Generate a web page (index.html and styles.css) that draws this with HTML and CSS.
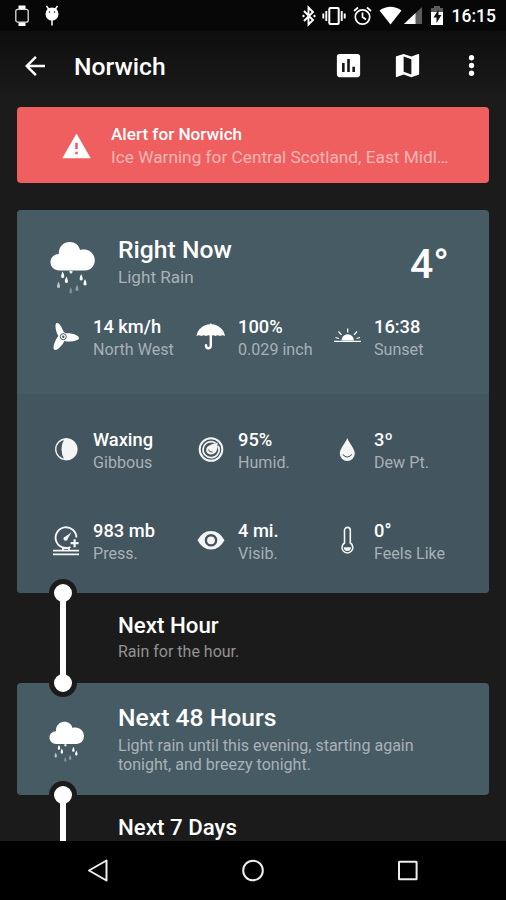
FILE: index.html
```html
<!DOCTYPE html>
<html lang="en">
<head>
<meta charset="utf-8">
<title>Norwich</title>
<link rel="stylesheet" href="styles.css">
</head>
<body>
<svg class="defs" width="0" height="0">
  <symbol id="rain" viewBox="0 0 46 54">
    <path d="M9.300 29.500C4 29.500.5 25.600.5 21.200C.5 16.700 4 13.300 8.800 13.100C8.500 6 13.300 1 19.800 1C24.800 1 28.800 4 30.100 8.900C38.300 6.800 44.800 12.200 44.800 19.300C44.800 25.200 40.600 29.500 35.100 29.500Z"/>
    <path d="M12.700 30.500c1.500 3 2.500 6.500 0 6.500s-1.500-3.500 0-6.500z"/>
    <path d="M16.400 35.500c1.500 3 2.500 6.500 0 6.500s-1.500-3.500 0-6.500z"/>
    <path d="M31.200 33c1.500 3 2.500 6.500 0 6.500s-1.500-3.500 0-6.500z"/>
    <path d="M35 38c1.500 3 2.500 6.500 0 6.500s-1.500-3.500 0-6.500z"/>
    <path opacity=".9" d="M19.300 30h3.300q-.1 2.800-1.600 2.800t-1.700-2.800z"/>
    <path opacity=".65" d="M8.500 40.500c1.500 3 2.500 6.500 0 6.500s-1.500-3.500 0-6.500z"/>
    <path opacity=".4" d="M27 43.500c1.500 3 2.500 6.500 0 6.500s-1.500-3.500 0-6.500z"/>
    <path opacity=".3" d="M20.800 46c1.500 3 2.500 6.500 0 6.500s-1.500-3.500 0-6.500z"/>
  </symbol>
</svg>
<div class="screen">
  <header class="status">
    <svg class="watch" width="14" height="22" viewBox="0 0 14 22"><path d="M3.500.5h7v4h-7zM3.500 17h7v4h-7z"/><rect x=".8" y="4.300" width="12.400" height="12.900" rx="2" fill="#070707" stroke="#ddd" stroke-width="1.300"/></svg>
    <svg class="droid" width="14" height="22" viewBox="0 0 14 22"><path d="M1.500 1l2.500 3.500M12.500 1L10 4.500M7 15v5.500" stroke="#fff" stroke-width="1.500"/><ellipse cx="7" cy="9" rx="6.500" ry="6.600"/><circle cx="4.500" cy="7" r=".8" fill="#222"/><circle cx="9.500" cy="7" r=".8" fill="#222"/></svg>
    <div class="tray">
      <svg width="14" height="22" viewBox="0 0 14 22"><path d="M2 6l9 9-4.500 4.500V2.500L11 7l-9 9" fill="none" stroke="#fff" stroke-width="1.900"/><path d="M12.500 9.500l1.500 1.500-1.500 1.500L11 11zM1.500 9.500L3 11l-1.500 1.500L0 11z"/></svg>
      <svg class="vibrate" width="24" height="22" viewBox="0 0 24 22"><rect x="7.300" y="3" width="9.400" height="16" rx="1" fill="none" stroke="#fff" stroke-width="2"/><path d="M4.300 6v10M19.700 6v10M1.300 8.500v5M22.700 8.500v5" stroke="#fff" stroke-width="1.900"/></svg>
      <svg class="alarm" width="19" height="22" viewBox="0 0 19 22"><g fill="none" stroke="#fff" stroke-width="1.700"><circle cx="9.500" cy="12" r="7.200"/><path d="M9.500 7.500V12l3.500 2.500M1 6l4-3.500M18 6l-4-3.500"/></g></svg>
      <svg class="wifi" width="23" height="22" viewBox="0 0 23 22"><path d="M11.500 19.500L.5 5.500Q11.500-2 22.500 5.500z"/></svg>
      <svg class="signal" width="18" height="22" viewBox="0 0 18 22"><path d="M18 2v17H0z" fill="#5b5b5b"/><path d="M11.500 8v11H0z"/></svg>
      <svg class="battery" width="14" height="22" viewBox="0 0 14 22"><path d="M4 1h6v2h3v7H1V3h3z" fill="#5b5b5b"/><path d="M1 7h12v13H1z"/><path d="M8.500 4.500L3.500 12.500h3V18l5-8h-3z" fill="#111"/></svg>
      <span class="clock">16:15</span>
    </div>
  </header>

  <nav class="appbar">
    <svg width="30" height="30" viewBox="0 0 24 24"><path d="M20 11H7.830l5.590-5.590L12 4l-8 8 8 8 1.410-1.410L7.830 13H20z"/></svg>
    <h1>Norwich</h1>
    <svg class="chart" width="31" height="31" viewBox="0 0 24 24"><path d="M19 3H5c-1.100 0-2 .9-2 2v14c0 1.100.9 2 2 2h14c1.100 0 2-.9 2-2V5c0-1.100-.9-2-2-2zM9 17H7v-7h2zm4 0h-2V7h2zm4 0h-2v-4h2z"/></svg>
    <svg class="map" width="31" height="31" viewBox="0 0 24 24"><path d="M20.500 3l-.16.030L15 5.100 9 3 3.360 4.900c-.21.070-.36.250-.36.480V20.500c0 .280.220.500.500.500l.160-.030L9 18.900l6 2.100 5.640-1.900c.21-.07.360-.25.360-.48V3.500c0-.28-.22-.5-.5-.5zM15 19l-6-2.110V5l6 2.110z"/></svg>
    <svg class="more" width="31" height="31" viewBox="0 0 24 24"><circle cx="12" cy="6" r="2.050"/><circle cx="12" cy="12" r="2.050"/><circle cx="12" cy="18" r="2.050"/></svg>
  </nav>

  <main>
    <section class="alert">
      <svg width="31" height="31" viewBox="0 0 24 24"><path d="M1 21h22L12 2zm12-3h-2v-2h2zm0-4h-2V9h2z"/></svg>
      <div>
        <h2>Alert for Norwich</h2>
        <p>Ice Warning for Central Scotland, East Midl…</p>
      </div>
    </section>

    <section class="now card">
      <div class="top">
        <div class="summary">
          <svg width="46" height="54"><use href="#rain"/></svg>
          <div class="label">
            <h2>Right Now</h2>
            <p>Light Rain</p>
          </div>
          <span class="temp">4°</span>
        </div>
        <div class="stats">
          <div class="stat">
            <svg width="32" height="32" viewBox="0 0 32 32"><path d="M13.300 9C11.500 4 8.500.3 6.600 1C4.300 2 6 10 8.300 14C5 18 2.300 26 4.200 27.500C6.500 29.500 12 24 14.500 19C20 20.500 29 18.800 29 16C29 13 21 10.500 16 11.300C15 11 14 10.500 13.300 9Z"/><circle cx="13.300" cy="14.700" r="3" fill="none" stroke="#485b65" stroke-width="1"/><circle cx="13.300" cy="14.700" r="1.200" fill="#485b65"/></svg>
            <div><b>14 km/h</b><span>North West</span></div>
          </div>
          <div class="stat">
            <svg width="32" height="32" viewBox="0 0 32 32"><path d="M1.500 14C2.500 7 8.500 2.500 14.900 2.200Q15.800.2 16.700 2.200C23 2.500 29 7 30 14Q27.500 12.600 25 14Q22.500 12.600 20.500 14Q18 12.600 15.800 14Q13.500 12.600 11 14Q8.500 12.600 6.500 14Q4 12.600 1.500 14Z"/><path d="M15.800 13.500V23.500C15.800 27.500 10.800 27 11 23.300" fill="none" stroke="#fff" stroke-width="2.400" stroke-linecap="round"/></svg>
            <div><b>100%</b><span>0.029 inch</span></div>
          </div>
          <div class="stat">
            <svg width="32" height="32" viewBox="0 0 32 32"><path d="M10.500 18.500a6.200 6.200 0 0 1 12.400 0z"/><path d="M3 19.300h27M16.700 6.500v4M7.500 9.500l3 3.300M26 9.500l-3 3.300M4.500 15.500l3.500 1M29 15.500l-3.500 1" stroke="#fff" stroke-width="1.200"/></svg>
            <div><b>16:38</b><span>Sunset</span></div>
          </div>
        </div>
      </div>
      <div class="bottom">
        <div class="stats">
          <div class="stat">
            <svg width="32" height="32" viewBox="0 0 32 32"><circle cx="16" cy="16.300" r="10.300" fill="none" stroke="#f5f5f5" stroke-width="1.300"/><path d="M14.500 5.500A11 11 0 1 1 14.500 27.100Q11.500 22 11.500 16.300T14.500 5.500Z"/></svg>
            <div><b>Waxing</b><span>Gibbous</span></div>
          </div>
          <div class="stat">
            <svg width="32" height="32" viewBox="0 0 32 32"><g fill="none" stroke="#f5f5f5"><circle cx="16" cy="16.500" r="11.300" stroke-width="2"/><path d="M20.500 10A8 8 0 1 0 23.200 13" stroke-width="1.700"/></g><path d="M22.500 9.500C23 15 22 21 16.500 21.500C12.500 21.500 10.500 18.500 11.300 15.700C12.500 12 17 11.500 22.500 9.500Z"/><path d="M13.500 16.500q.5 3 4 2.500" fill="none" stroke="#43555e" stroke-width="1"/></svg>
            <div><b>95%</b><span>Humid.</span></div>
          </div>
          <div class="stat">
            <svg width="32" height="32" viewBox="0 0 32 32"><path d="M16.300 5C18 10 23.800 15.500 23.800 20.500A7.500 7.500 0 0 1 8.800 20.500C8.800 15.500 14.600 10 16.300 5Z"/><path d="M11.800 21.500q4.500 5 9 0" fill="none" stroke="#43555e" stroke-width="1.100"/></svg>
            <div><b>3º</b><span>Dew Pt.</span></div>
          </div>
          <div class="stat">
            <svg width="32" height="32" viewBox="0 0 32 32"><g fill="none" stroke="#f5f5f5"><path d="M20.500 23A10.400 10.400 0 1 1 26.400 13.500M13 23.500v2.500M19 23.500v2.500" stroke-width="1.900"/><path d="M3 26.600h26M3 30.300h26" stroke-width="1.700"/><path d="M24.600 15.200v8M20.600 19.200h8" stroke-width="2.200"/></g><path d="M21.500 8.300L17.800 14.500A2.200 2.200 0 1 1 15.500 12.400Z"/></svg>
            <div><b>983 mb</b><span>Press.</span></div>
          </div>
          <div class="stat">
            <svg width="32" height="32" viewBox="0 0 32 32"><path fill-rule="evenodd" d="M2.500 16.300Q7.500 7 16 7T29.500 16.300Q24.500 25.600 16 25.600T2.500 16.300ZM16 10a6.300 6.300 0 1 0 0 12.600a6.300 6.300 0 1 0 0-12.600Z"/><circle cx="16" cy="16.300" r="3.900"/></svg>
            <div><b>4 mi.</b><span>Visib.</span></div>
          </div>
          <div class="stat">
            <svg width="32" height="32" viewBox="0 0 32 32"><path d="M13.500 19V6.300a2.900 2.900 0 0 1 5.800 0V19a5.400 5.400 0 1 1-5.800 0z" fill="none" stroke="#f5f5f5" stroke-width="1.600"/><path d="M12.800 23.300h7.200a3.600 3.600 0 0 1-7.200 0z"/></svg>
            <div><b>0°</b><span>Feels Like</span></div>
          </div>
        </div>
      </div>
    </section>

    <section class="hour link">
      <h3>Next Hour</h3>
      <p>Rain for the hour.</p>
      <i class="line"></i><i class="dot start"></i><i class="dot end"></i>
    </section>

    <section class="days card">
      <svg width="36" height="42"><use href="#rain"/></svg>
      <div class="label">
        <h2>Next 48 Hours</h2>
        <p>Light rain until this evening, starting again tonight, and breezy tonight.</p>
      </div>
    </section>

    <section class="week link">
      <h3>Next 7 Days</h3>
      <i class="line"></i><i class="dot start"></i>
    </section>
  </main>

  <footer class="navbar">
    <svg width="24" height="28" viewBox="0 0 24 28"><path d="M20.500 3.500v20L3 13.500z"/></svg>
    <svg width="24" height="28" viewBox="0 0 24 28"><circle cx="12" cy="13.500" r="9.800"/></svg>
    <svg width="24" height="28" viewBox="0 0 24 28"><rect x="3" y="4.700" width="17.600" height="17.600" rx=".5"/></svg>
  </footer>
</div>
</body>
</html>
```
FILE: styles.css
```css
* { box-sizing: border-box; margin: 0; padding: 0; }
body { background: #1b1b1b; color: #fff; font-family: Roboto, "Liberation Sans", sans-serif; }
svg { display: block; flex: none; fill: #fff; }
.defs { position: absolute; }
h1, h2, h3, b { font-weight: 500; white-space: nowrap; }
.screen { width: 506px; height: 900px; display: flex; flex-direction: column; overflow: hidden; }

.status { height: 31px; flex: none; display: flex; align-items: center; padding: 0 10px 0 15px; background: #070707; }
.droid { margin-left: 16px; }
.tray { margin-left: auto; display: flex; align-items: center; }
.vibrate { margin-left: 6px; }
.alarm { margin-left: 7px; }
.wifi { margin-left: 7px; }
.signal { margin-left: 2px; }
.battery { margin-left: 8px; }
.clock { margin-left: 8px; font-size: 17.5px; font-weight: 500; line-height: 22px; }

.appbar { height: 76px; flex: none; display: flex; align-items: center; padding: 0 19px 7px 20px; background: linear-gradient(#0e0e0e, #1b1b1b 90%); }
.appbar h1 { margin-left: 24px; padding-top: 2px; font-size: 24.7px; line-height: 30px; }
.chart { margin-left: auto; }
.map { margin-left: 28px; }
.more { margin-left: 33px; }

main { flex: 1; min-height: 0; overflow: hidden; padding: 0 17px; }
.alert { height: 76px; display: flex; align-items: center; padding: 2px 30px 0 44px; border-radius: 4px; background: #ef5f5f; }
.alert div { margin-left: 19px; }
.alert h2 { font-size: 17.15px; line-height: 22px; }
.alert p { font-size: 17.25px; line-height: 24px; color: #f8b5b5; white-space: nowrap; }

.card { border-radius: 4px; overflow: hidden; background: #475b65; }
.now { height: 383px; margin-top: 27px; }
.top { height: 184px; padding: 25px 0 0 33px; }
.bottom { height: 199px; padding: 32px 0 0 33px; background: #43555e; }
.bottom svg { fill: #f5f5f5; }
.summary { height: 80px; display: flex; align-items: flex-start; }
.summary svg { margin-top: 6px; }
.label { margin-left: 22px; }
.label h2 { font-size: 24.7px; line-height: 30px; }
.label p { font-size: 17.1px; line-height: 25px; color: #a9b2b7; }
.temp { margin: 4px 40px 0 auto; font-size: 41px; font-weight: 500; line-height: 50px; }
.stats { display: grid; grid-template-columns: 145px 136px 140px; row-gap: 45px; }
.stat { display: flex; align-items: center; height: 46px; }
.stat svg { margin-right: 11px; }
.stat div { padding-top: 3px; }
.top .stat div { padding: 0 0 1px; }
.stat b, .stat span { display: block; white-space: nowrap; }
.stat b { font-size: 18.3px; line-height: 23px; }
.stat span { font-size: 16.1px; line-height: 23px; color: #a8b1b5; }

.link { position: relative; z-index: 1; padding-left: 101px; }
.link h3 { font-size: 22.3px; line-height: 28px; }
.link p { padding-top: 2px; font-size: 16px; line-height: 22px; color: #929292; }
.hour { height: 90px; padding-top: 18px; }
.line { position: absolute; left: 43px; top: 0; bottom: 0; width: 6px; background: #fff; z-index: 1; }
.dot { position: absolute; left: 32px; width: 28px; height: 28px; border: 5px solid #1b1b1b; border-radius: 50%; background: #fff; }
.start { top: -14px; }
.end { bottom: -14px; }

.days { height: 112px; display: flex; align-items: flex-start; padding: 20px 40px 0 32px; }
.days svg { margin-top: 18px; }
.days .label { margin-left: 33px; width: 320px; }
.days .label p { font-size: 16.05px; line-height: 19px; margin-top: 3px; }
.week { height: 90px; padding-top: 18px; }

.navbar { height: 59px; flex: none; display: flex; align-items: center; justify-content: space-between; padding: 0 86px; background: #000; }
.navbar svg { fill: none; stroke: #eee; stroke-width: 2; stroke-linejoin: round; }
```
